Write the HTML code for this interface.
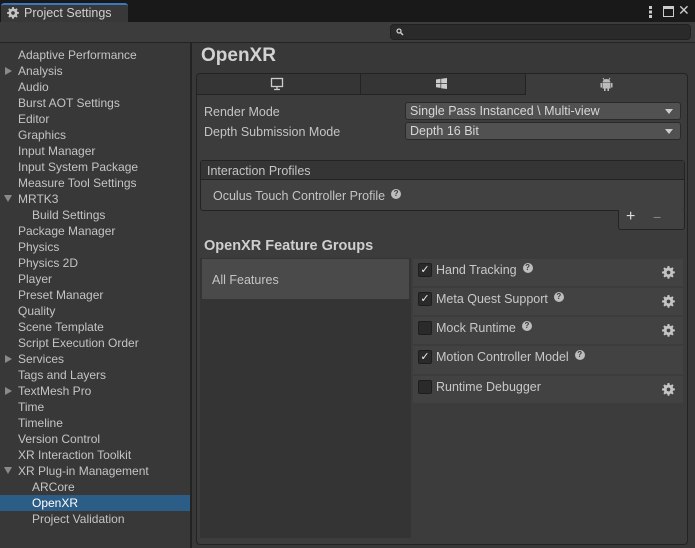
<!DOCTYPE html>
<html><head><meta charset="utf-8"><style>
*{box-sizing:border-box;margin:0;padding:0}
body{width:695px;height:548px;background:#282828;font-family:"Liberation Sans",sans-serif;font-size:12px;color:#c4c4c4;position:relative;overflow:hidden}
.a{position:absolute}
.side div{position:absolute;left:18px;height:16px;line-height:18px;white-space:nowrap}
.tri{position:absolute;left:5px;width:0;height:0;border-top:4px solid transparent;border-bottom:4px solid transparent;border-left:7px solid #8a8a8a}
.tridown{position:absolute;left:4px;width:0;height:0;border-left:4px solid transparent;border-right:4px solid transparent;border-top:7px solid #8a8a8a}
.row{position:absolute;left:413px;width:270px;height:27px;background:#424242}
.cb{position:absolute;left:5px;top:4px;width:14px;height:14px;background:#2a2a2a;border:1px solid #1e1e1e;border-radius:2px;color:#eee;font-size:11px;line-height:12px;text-align:center}
.lbl{position:absolute;left:23px;top:4px;font-size:12.5px;color:#c8c8c8}
.q{display:inline-block;width:10px;height:10px;border-radius:50%;background:#bdbdbd;color:#3a3a3a;font-size:8px;line-height:10px;text-align:center;font-weight:bold;vertical-align:4px;margin-left:6px}
.gear{position:absolute;right:8px;top:7px}
</style></head><body>
<svg width="0" height="0" style="position:absolute"><defs><g id="g"><path d="M5.2 0h1.6l.3 1.6 1.1.5 1.4-.9 1.1 1.1-.9 1.4.5 1.1 1.6.3v1.6l-1.6.3-.5 1.1.9 1.4-1.1 1.1-1.4-.9-1.1.5-.3 1.6H5.2l-.3-1.6-1.1-.5-1.4.9-1.1-1.1.9-1.4-.5-1.1L0 6.8V5.2l1.6-.3.5-1.1-.9-1.4 1.1-1.1 1.4.9 1.1-.5z" fill="#c4c4c4"/><circle cx="6" cy="6" r="1.7" fill="#424242"/></g></defs></svg>
<!-- title tab -->
<div class="a" style="left:0;top:0;width:695px;height:22px;background:#191919"></div>
<div class="a" style="left:1px;top:3px;width:127px;height:20px;background:#383838;border-top:2px solid #3a79bb;border-radius:3px 3px 0 0"></div>
<svg class="a" style="left:7px;top:7px" width="12" height="12" viewBox="0 0 12 12"><use href="#g"/><circle cx="6" cy="6" r="1.7" fill="#383838"/></svg>
<div class="a" style="left:24px;top:6px;font-size:12.5px;color:#d0d0d0">Project Settings</div>
<div class="a" style="left:649px;top:6px;width:3px;height:12px;background:linear-gradient(#ccc 0 3px,transparent 3px 4.5px,#ccc 4.5px 7.5px,transparent 7.5px 9px,#ccc 9px 12px)"></div>
<div class="a" style="left:663px;top:6px;width:11px;height:11px;border:1.5px solid #ccc;border-top-width:3px"></div>
<div class="a" style="left:678px;top:2px;font-size:14px;color:#ccc">✕</div>
<!-- toolbar -->
<div class="a" style="left:0;top:22px;width:695px;height:21px;background:#3c3c3c;border-bottom:1px solid #232323"></div>
<div class="a" style="left:390px;top:24px;width:301px;height:16px;background:#2a2a2a;border:1px solid #212121;border-radius:4px"></div>
<svg class="a" style="left:396px;top:28px" width="8" height="8" viewBox="0 0 8 8"><circle cx="3" cy="3" r="2" fill="none" stroke="#ccc" stroke-width="1.3"/><path d="M4.5 4.5L7 7" stroke="#ccc" stroke-width="1.5"/></svg>
<!-- sidebar -->
<div class="a" style="left:0;top:43px;width:190px;height:505px;background:#383838"></div>
<div class="a" style="left:190px;top:43px;width:2px;height:505px;background:#232323"></div>
<div class="a" style="left:0;top:495px;width:190px;height:16px;background:#2c5d87"></div>
<div class="side a" style="left:0;top:0;width:190px;height:548px">
<div style="top:46px">Adaptive Performance</div>
<div style="top:62px">Analysis</div>
<div style="top:78px">Audio</div>
<div style="top:94px">Burst AOT Settings</div>
<div style="top:110px">Editor</div>
<div style="top:126px">Graphics</div>
<div style="top:142px">Input Manager</div>
<div style="top:158px">Input System Package</div>
<div style="top:174px">Measure Tool Settings</div>
<div style="top:190px">MRTK3</div>
<div style="top:206px;left:32px">Build Settings</div>
<div style="top:222px">Package Manager</div>
<div style="top:238px">Physics</div>
<div style="top:254px">Physics 2D</div>
<div style="top:270px">Player</div>
<div style="top:286px">Preset Manager</div>
<div style="top:302px">Quality</div>
<div style="top:318px">Scene Template</div>
<div style="top:334px">Script Execution Order</div>
<div style="top:350px">Services</div>
<div style="top:366px">Tags and Layers</div>
<div style="top:382px">TextMesh Pro</div>
<div style="top:398px">Time</div>
<div style="top:414px">Timeline</div>
<div style="top:430px">Version Control</div>
<div style="top:446px">XR Interaction Toolkit</div>
<div style="top:462px">XR Plug-in Management</div>
<div style="top:478px;left:32px">ARCore</div>
<div style="top:494px;left:32px;color:#fff">OpenXR</div>
<div style="top:510px;left:32px">Project Validation</div>
</div>
<span class="tri" style="top:67px"></span>
<span class="tridown" style="top:195px"></span>
<span class="tri" style="top:355px"></span>
<span class="tri" style="top:387px"></span>
<span class="tridown" style="top:467px"></span>
<!-- right pane -->
<div class="a" style="left:192px;top:43px;width:503px;height:505px;background:#383838"></div>
<div class="a" style="left:201px;top:45px;font-size:19px;font-weight:bold;color:#d2d2d2">OpenXR</div>
<div class="a" style="left:196px;top:73px;width:492px;height:472px;border:1px solid #232323;border-radius:4px;background:#3c3c3c"></div>
<div class="a" style="left:197px;top:74px;width:328px;height:21px;background:#353535;border-bottom:1px solid #232323;border-radius:3px 0 0 0"></div>
<div class="a" style="left:360px;top:74px;width:1px;height:21px;background:#232323"></div>
<div class="a" style="left:525px;top:74px;width:1px;height:21px;background:#232323"></div>
<svg class="a" style="left:270px;top:77px" width="14" height="14" viewBox="0 0 14 14"><rect x="1.5" y="1.5" width="11" height="8" fill="none" stroke="#ccc" stroke-width="1.3"/><path d="M7 10v2.5M4 12.5h6" stroke="#ccc" stroke-width="1.3"/></svg>
<svg class="a" style="left:436px;top:78px" width="11" height="11" viewBox="0 0 11 11"><path d="M0 1.5l4.5-.7v4.2H0zM5.2 0.7L11 0v5H5.2zM0 5.7h4.5v4.2L0 9.3zM5.2 5.7H11v5.3l-5.8-.8z" fill="#ccc"/></svg>
<svg class="a" style="left:600px;top:77px" width="13" height="15" viewBox="0 0 13 15"><path d="M3 1l1.3 2M10 1L8.7 3" stroke="#bbb"/><path d="M2.5 5.5a4 3.5 0 0 1 8 0z" fill="#bbb"/><rect x="2.5" y="6" width="8" height="5.5" fill="#bbb"/><rect x="0.5" y="6" width="1.5" height="4.5" fill="#bbb"/><rect x="11" y="6" width="1.5" height="4.5" fill="#bbb"/><rect x="4" y="11" width="1.6" height="3" fill="#bbb"/><rect x="7.4" y="11" width="1.6" height="3" fill="#bbb"/></svg>
<div class="a" style="left:204px;top:105px;font-size:12.5px">Render Mode</div>
<div class="a" style="left:204px;top:125px;font-size:12.5px">Depth Submission Mode</div>
<div class="a" style="left:405px;top:102px;width:276px;height:18px;background:#515151;border:1px solid #2a2a2a;border-radius:3px;padding:1px 0 0 4px;font-size:12.5px;color:#d6d6d6">Single Pass Instanced \ Multi-view</div>
<div class="a" style="left:405px;top:122px;width:276px;height:18px;background:#515151;border:1px solid #2a2a2a;border-radius:3px;padding:1px 0 0 4px;font-size:12.5px;color:#d6d6d6">Depth 16 Bit</div>
<div class="a" style="left:665px;top:109px;border-left:4px solid transparent;border-right:4px solid transparent;border-top:5px solid #ccc"></div>
<div class="a" style="left:665px;top:129px;border-left:4px solid transparent;border-right:4px solid transparent;border-top:5px solid #ccc"></div>
<!-- interaction profiles -->
<div class="a" style="left:200px;top:160px;width:485px;height:51px;border:1px solid #232323;border-radius:3px;background:#414141"></div>
<div class="a" style="left:201px;top:161px;width:483px;height:19px;background:#353535;border-bottom:1px solid #232323;padding:3px 0 0 6px;font-size:12.5px">Interaction Profiles</div>
<div class="a" style="left:213px;top:189px;font-size:12.5px">Oculus Touch Controller Profile<span class="q">?</span></div>
<div class="a" style="left:618px;top:210px;width:67px;height:20px;border:1px solid #232323;border-top:none;border-radius:0 0 3px 3px;background:#414141"></div>
<div class="a" style="left:626px;top:208px;font-size:16px;color:#ddd">+</div>
<div class="a" style="left:653px;top:209px;font-size:14px;color:#888">−</div>
<div class="a" style="left:204px;top:238px;font-size:14.5px;font-weight:bold;color:#cfcfcf">OpenXR Feature Groups</div>
<!-- feature groups -->
<div class="a" style="left:200px;top:258px;width:211px;height:280px;background:#343434"></div>
<div class="a" style="left:202px;top:259px;width:207px;height:40px;background:#4a4a4a;padding:14px 0 0 10px;font-size:12.5px">All Features</div>
<div class="row" style="top:259px"><div class="cb">✓</div><div class="lbl">Hand Tracking<span class="q">?</span></div><svg class="gear" width="13" height="13" viewBox="0 0 12 12"><use href="#g"/></svg></div>
<div class="row" style="top:288px"><div class="cb">✓</div><div class="lbl">Meta Quest Support<span class="q">?</span></div><svg class="gear" width="13" height="13" viewBox="0 0 12 12"><use href="#g"/></svg></div>
<div class="row" style="top:317px"><div class="cb"></div><div class="lbl">Mock Runtime<span class="q">?</span></div><svg class="gear" width="13" height="13" viewBox="0 0 12 12"><use href="#g"/></svg></div>
<div class="row" style="top:346px;height:28px"><div class="cb">✓</div><div class="lbl">Motion Controller Model<span class="q">?</span></div></div>
<div class="row" style="top:376px"><div class="cb"></div><div class="lbl">Runtime Debugger</div><svg class="gear" width="13" height="13" viewBox="0 0 12 12"><use href="#g"/></svg></div>
</body></html>
